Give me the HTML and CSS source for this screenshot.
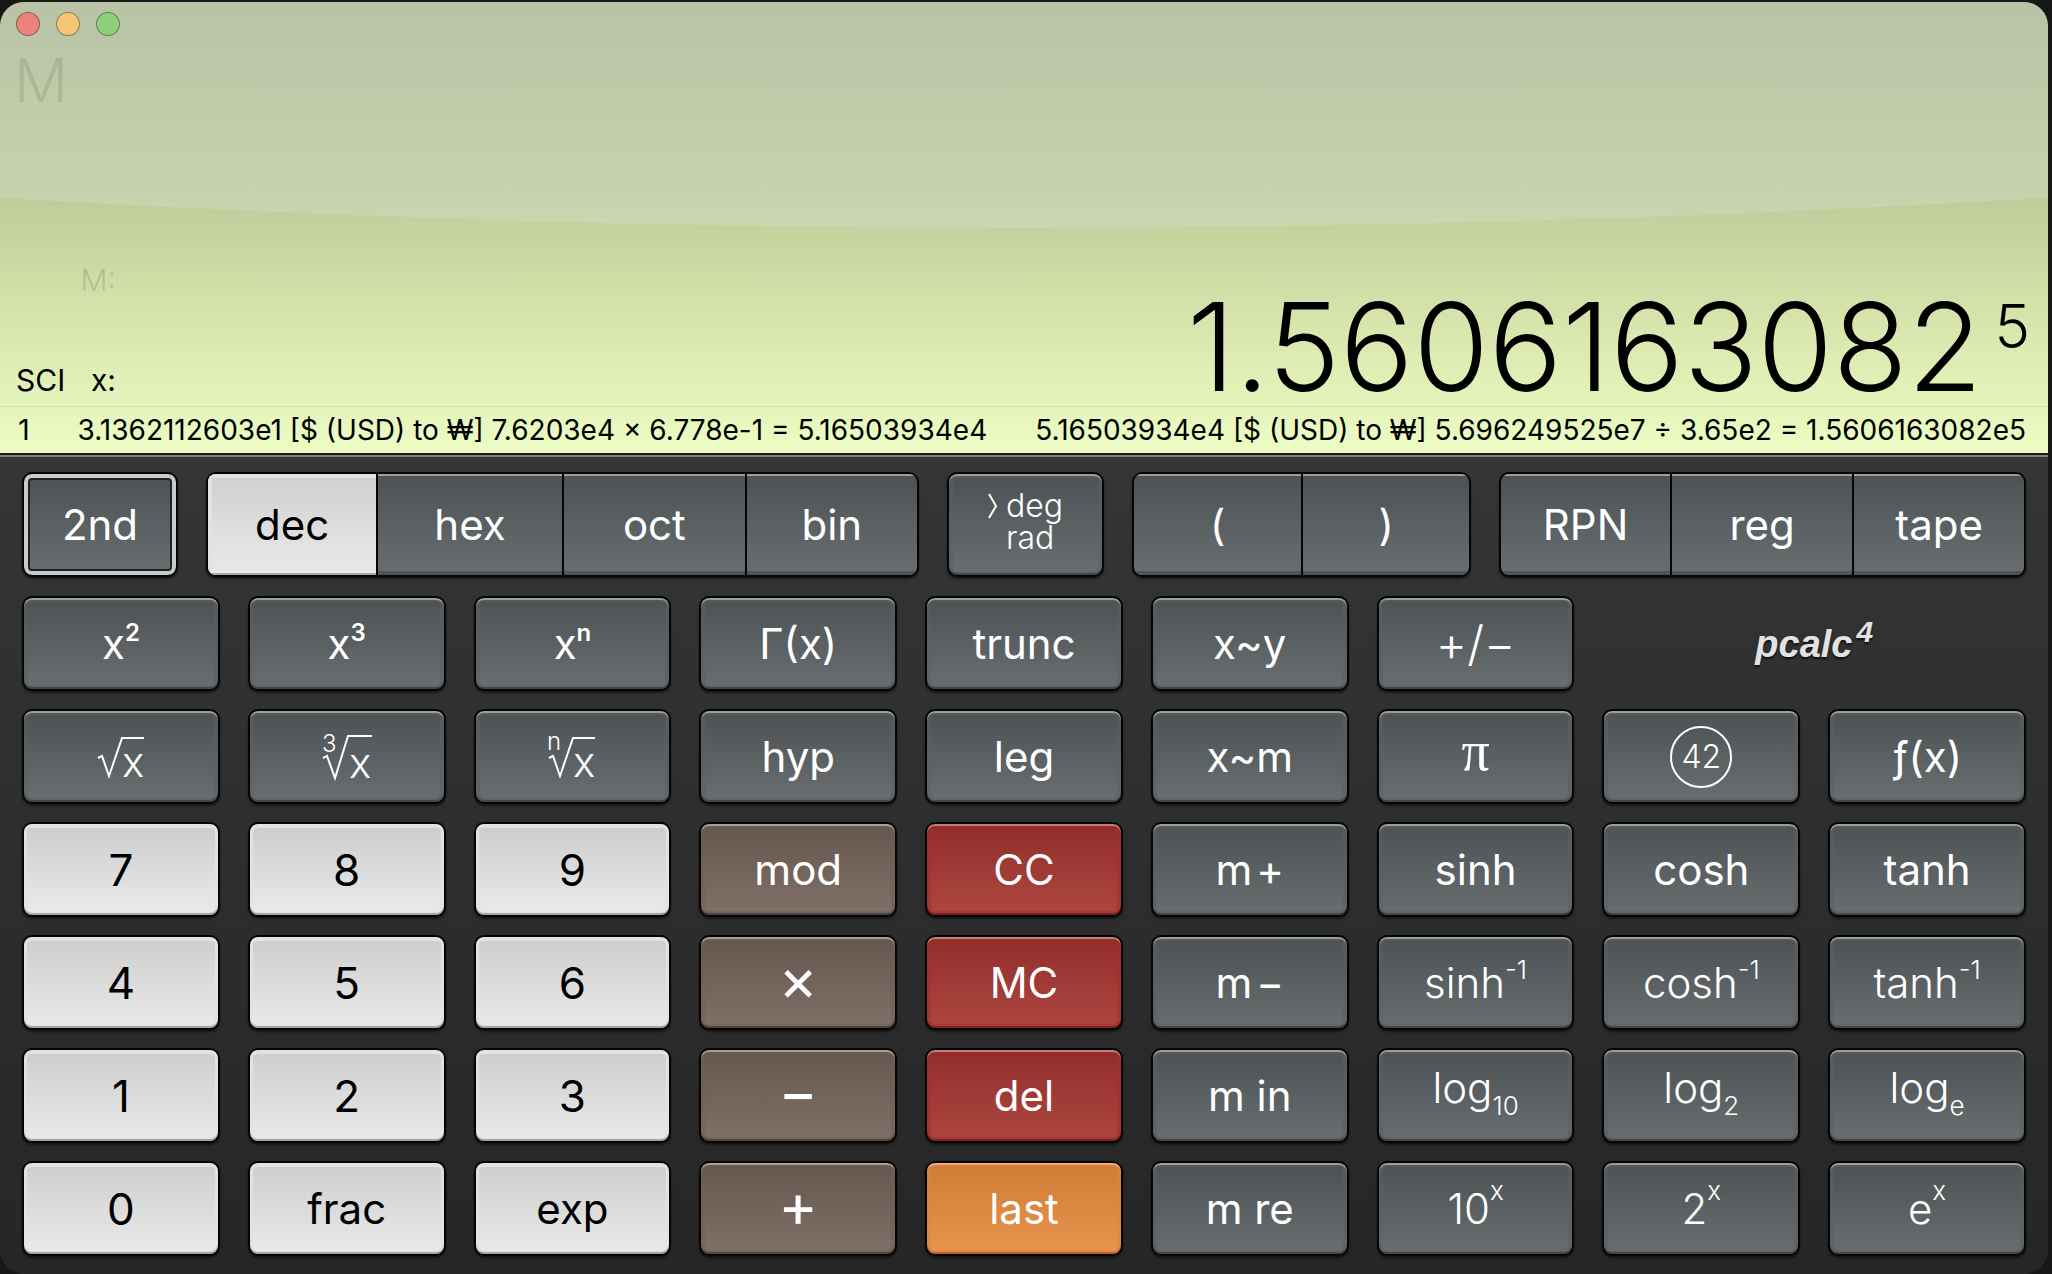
FILE: index.html
```html
<!DOCTYPE html>
<html lang="en">
<head>
<meta charset="utf-8">
<title>PCalc</title>
<link rel="stylesheet" href="styles.css">
</head>
<body>
<main class="window">
  <section class="display">
    <svg class="gloss" viewBox="0 0 100 228" preserveAspectRatio="none" aria-hidden="true"><path d="M0 0H100V196Q50 256 0 196Z" fill="#dfe9ee" fill-opacity=".24"/></svg>
    <div class="titlebar">
      <button class="light close" aria-label="Close"></button>
      <button class="light minimize" aria-label="Minimize"></button>
      <button class="light zoom" aria-label="Zoom"></button>
    </div>
    <div class="memory-flag">M</div>
    <div class="memory-row"><span>M:</span></div>
    <div class="value-row">
      <div class="value-labels"><span>SCI</span><span>x:</span></div>
      <output class="value">1.5606163082<sup>5</sup></output>
    </div>
    <div class="tape">
      <span>1</span>
      <span>3.1362112603e1 [$ (USD) to ₩] 7.6203e4 × 6.778e-1 = 5.16503934e4</span>
      <span>5.16503934e4 [$ (USD) to ₩] 5.696249525e7 ÷ 3.65e2 = 1.5606163082e5</span>
    </div>
  </section>
  <section class="keypad">
    <div class="modes">
      <button class="key second">2nd</button>
      <div class="group bases">
        <button class="segment selected">dec</button><button class="segment">hex</button><button class="segment">oct</button><button class="segment">bin</button>
      </div>
      <button class="key angle"><svg class="pointer" viewBox="0 0 10 26" aria-hidden="true"><path d="M1 1L8 13L1 25" fill="none" stroke="#fff" stroke-width="2"/></svg><span>deg<br>rad</span></button>
      <div class="group parens">
        <button class="segment">(</button><button class="segment">)</button>
      </div>
      <div class="group panels">
        <button class="segment">RPN</button><button class="segment">reg</button><button class="segment">tape</button>
      </div>
    </div>
    <div class="keys">
      <button class="key">x<sup class="power">2</sup></button>
      <button class="key">x<sup class="power">3</sup></button>
      <button class="key">x<sup class="power">n</sup></button>
      <button class="key">Γ(x)</button>
      <button class="key">trunc</button>
      <button class="key">x~y</button>
      <button class="key thin negate">+/−</button>
      <div class="logo"><span class="logo-name">pcalc</span><span class="logo-version">4</span></div>

      <button class="key" aria-label="Square root"><svg class="root" viewBox="0 0 52 46"><path d="M3 24L7 22L14 42L27 4H49"/><text x="27" y="43">x</text></svg></button>
      <button class="key" aria-label="Cube root"><svg class="root" viewBox="0 0 52 46"><path d="M2 24L6 22L14 44L27 2H51"/><text x="28" y="44">x</text><text class="index" x="1" y="18">3</text></svg></button>
      <button class="key" aria-label="nth root"><svg class="root" viewBox="0 0 52 46"><path d="M3 24L7 22L14 42L27 4H49"/><text x="27" y="43">x</text><text class="index" x="1" y="16">n</text></svg></button>
      <button class="key">hyp</button>
      <button class="key">leg</button>
      <button class="key">x~m</button>
      <button class="key pi">π</button>
      <button class="key"><span class="circled">42</span></button>
      <button class="key">ƒ(x)</button>

      <button class="key digit">7</button>
      <button class="key digit">8</button>
      <button class="key digit">9</button>
      <button class="key operator">mod</button>
      <button class="key clear">CC</button>
      <button class="key">m&#8202;+</button>
      <button class="key">sinh</button>
      <button class="key">cosh</button>
      <button class="key">tanh</button>

      <button class="key digit">4</button>
      <button class="key digit">5</button>
      <button class="key digit">6</button>
      <button class="key operator sign">×</button>
      <button class="key clear">MC</button>
      <button class="key">m&#8202;−</button>
      <button class="key thin">sinh<sup>-1</sup></button>
      <button class="key thin">cosh<sup>-1</sup></button>
      <button class="key thin">tanh<sup>-1</sup></button>

      <button class="key digit">1</button>
      <button class="key digit">2</button>
      <button class="key digit">3</button>
      <button class="key operator sign">−</button>
      <button class="key clear">del</button>
      <button class="key">m in</button>
      <button class="key thin log">log<sub>10</sub></button>
      <button class="key thin log">log<sub>2</sub></button>
      <button class="key thin log">log<sub>e</sub></button>

      <button class="key digit">0</button>
      <button class="key digit word">frac</button>
      <button class="key digit word">exp</button>
      <button class="key operator sign">+</button>
      <button class="key last">last</button>
      <button class="key">m re</button>
      <button class="key thin exponent">10<sup>x</sup></button>
      <button class="key thin exponent">2<sup>x</sup></button>
      <button class="key thin exponent">e<sup>x</sup></button>
    </div>
  </section>
</main>
</body>
</html>
```
FILE: styles.css
```css
* { box-sizing: border-box; }

body {
  margin: 0;
  padding: 2px 4px 2px 0;
  background: #171717;
  font-family: Inter, "Liberation Sans", sans-serif;
}

button {
  margin: 0;
  padding: 0;
  font: inherit;
  color: inherit;
}

.window {
  display: flex;
  flex-direction: column;
  min-height: calc(100vh - 4px);
  border-radius: 24px;
  overflow: hidden;
  background: linear-gradient(#353535 35%, #262626);
}

/* Display */
.display {
  position: relative;
  display: flex;
  flex-direction: column;
  background: linear-gradient(#adb68f 0, #c0cc9a 200px, #dbe9b0 340px, #ecfcc2 450px);
  color: #000;
  font-weight: 400;
  font-size: 30px;
  line-height: 40px;
}

.gloss {
  position: absolute;
  inset: 0 0 auto 0;
  width: 100%;
  height: 228px;
}

.titlebar {
  position: relative;
  display: flex;
  gap: 16px;
  height: 48px;
  padding: 10px 16px;
}

.light {
  width: 24px;
  height: 24px;
  border: 1px solid rgba(70, 80, 50, .6);
  border-radius: 50%;
}

.close { background: #ec827c; }
.minimize { background: #f4c673; }
.zoom { background: #8dd07a; }

.memory-flag {
  position: relative;
  padding: 0 14px;
  margin-bottom: 150px;
  font-size: 60px;
  font-weight: 300;
  line-height: 60px;
  color: rgba(70, 90, 50, .16);
}

.memory-row {
  width: 116px;
  text-align: right;
  font-weight: 300;
  color: rgba(70, 90, 50, .22);
}

.value-row {
  display: flex;
  align-items: baseline;
  justify-content: space-between;
  padding: 0 18px 6px 16px;
}

.value-labels {
  display: flex;
  justify-content: space-between;
  width: 100px;
}

.value {
  font-size: 122px;
  font-weight: 300;
  line-height: 94px;
}

.value sup {
  margin-left: 12px;
  font-size: 60px;
  line-height: 0;
  vertical-align: 43px;
}

.tape {
  display: flex;
  justify-content: flex-end;
  gap: 48px;
  overflow: hidden;
  padding-right: 22px;
  border-top: 1px solid #d3e0ad;
  font-size: 28px;
  line-height: 46px;
  white-space: nowrap;
}

.tape span { flex: none; }

/* Keypad */
.keypad {
  display: flex;
  flex-direction: column;
  gap: 19px;
  padding: 17px 22px 18px;
  border-top: 2px solid #1c1c1c;
  box-shadow: inset 0 2px 0 #808080;
  color: #fff;
  font-size: 42px;
  line-height: 44px;
}

.modes {
  display: grid;
  grid-template-columns: 156fr 713fr 158fr 339fr 527fr;
  gap: 28px;
}

.keys {
  display: grid;
  grid-template-columns: repeat(9, 1fr);
  grid-auto-rows: 95px;
  gap: 18px 28px;
}

.key,
.group {
  border: 2px solid #050505;
  border-radius: 10px;
}

.key,
.segment {
  min-width: 0;
  background: linear-gradient(#4c5154, #696e71);
  text-align: center;
}

.key {
  box-shadow:
    inset 0 2px 0 #999d9e,
    inset 0 -2px 0 #414649,
    inset 0 0 0 4px rgba(90, 96, 100, .55),
    0 2px 2px rgba(0, 0, 0, .5);
}

.modes .key,
.group { height: 105px; }

.group {
  display: grid;
  overflow: hidden;
  background: #050505;
  box-shadow: 0 2px 2px rgba(0, 0, 0, .5);
  column-gap: 2px;
}

.bases { grid-template-columns: 169fr 184fr 182fr 170fr; }
.parens { grid-template-columns: 1fr 1fr; }
.panels { grid-template-columns: 170fr 182fr 171fr; }

.segment {
  border: 0;
  box-shadow:
    inset 0 2px 0 #999d9e,
    inset 0 -4px 0 #4e5457;
}

.segment.selected {
  background: linear-gradient(#cfcfcf, #eaeaea);
  box-shadow:
    inset 0 4px 0 #e2e2e2,
    inset 4px 0 0 #e2e2e2,
    inset 0 -2px 0 #a9a9a9;
  color: #000;
}

.modes .second {
  box-shadow:
    inset 0 0 0 4px #c9cbcb,
    inset 0 0 0 6px #202325,
    0 2px 2px rgba(0, 0, 0, .5);
}

.angle {
  display: flex;
  align-items: flex-start;
  justify-content: center;
  gap: 8px;
  padding-top: 16px;
  font-size: 32px;
  line-height: 32px;
  font-weight: 300;
  text-align: left;
}

.pointer {
  width: 10px;
  height: 26px;
  margin-top: 3px;
}

.digit {
  background: linear-gradient(#cdcdcd, #eaeaea);
  box-shadow:
    inset 0 -2px 0 #a4a6a5,
    inset 0 4px 0 #e2e2e2,
    inset 0 0 0 3px rgba(226, 226, 226, .9),
    0 2px 2px rgba(0, 0, 0, .5);
  color: #000;
  font-size: 44px;
}

.word { font-size: 42px; }

.operator {
  background: linear-gradient(#64574e, #807168);
  box-shadow:
    inset 0 2px 0 #a69f99,
    inset 0 -2px 0 #51463f,
    inset 0 0 0 4px rgba(110, 96, 86, .55),
    0 2px 2px rgba(0, 0, 0, .5);
}

.clear {
  background: linear-gradient(#912d29, #ae4742);
  box-shadow:
    inset 0 2px 0 #c07e7b,
    inset 0 -2px 0 #7d211d,
    inset 0 0 0 4px rgba(160, 48, 43, .55),
    0 2px 2px rgba(0, 0, 0, .5);
}

.last {
  background: linear-gradient(#cf7a35, #e9944f);
  box-shadow:
    inset 0 2px 0 #e5ad80,
    inset 0 -2px 0 #b5662a,
    inset 0 0 0 4px rgba(224, 132, 60, .55),
    0 2px 2px rgba(0, 0, 0, .5);
}

.sign {
  font-size: 60px;
  padding-bottom: 8px;
}

.thin { font-weight: 300; }

.negate { font-size: 48px; }

.key sup,
.key sub {
  font-size: 26px;
  line-height: 0;
}

.key sup { vertical-align: 19px; }
.key sub { vertical-align: -12px; }
.exponent sup { vertical-align: 24px; }
.log { padding-bottom: 16px; }

.key .power {
  font-size: 24px;
  font-weight: 600;
  vertical-align: 18px;
}

.root {
  display: block;
  width: 52px;
  height: 46px;
  margin: 0 auto;
  overflow: visible;
  fill: #fff;
  font-size: 42px;
  font-weight: 300;
}

.root path {
  fill: none;
  stroke: #fff;
  stroke-width: 2;
}

.index { font-size: 24px; }

.pi {
  padding-bottom: 12px;
  font-family: "Liberation Serif", serif;
  font-size: 56px;
}

.circled {
  display: block;
  width: 62px;
  height: 62px;
  margin: 0 auto;
  border: 2px solid #fff;
  border-radius: 50%;
  font-size: 32px;
  font-weight: 300;
  line-height: 58px;
}

.logo {
  grid-column: span 2;
  display: flex;
  align-items: center;
  justify-content: center;
  gap: 4px;
  font-family: "Liberation Sans Narrow", "Liberation Sans", sans-serif;
  font-style: italic;
  font-weight: 700;
  color: #e2e2e2;
  text-shadow: 0 2px 2px #111;
}

.logo-name { font-size: 38px; }

.logo-version {
  padding-bottom: 24px;
  font-size: 30px;
}
```
